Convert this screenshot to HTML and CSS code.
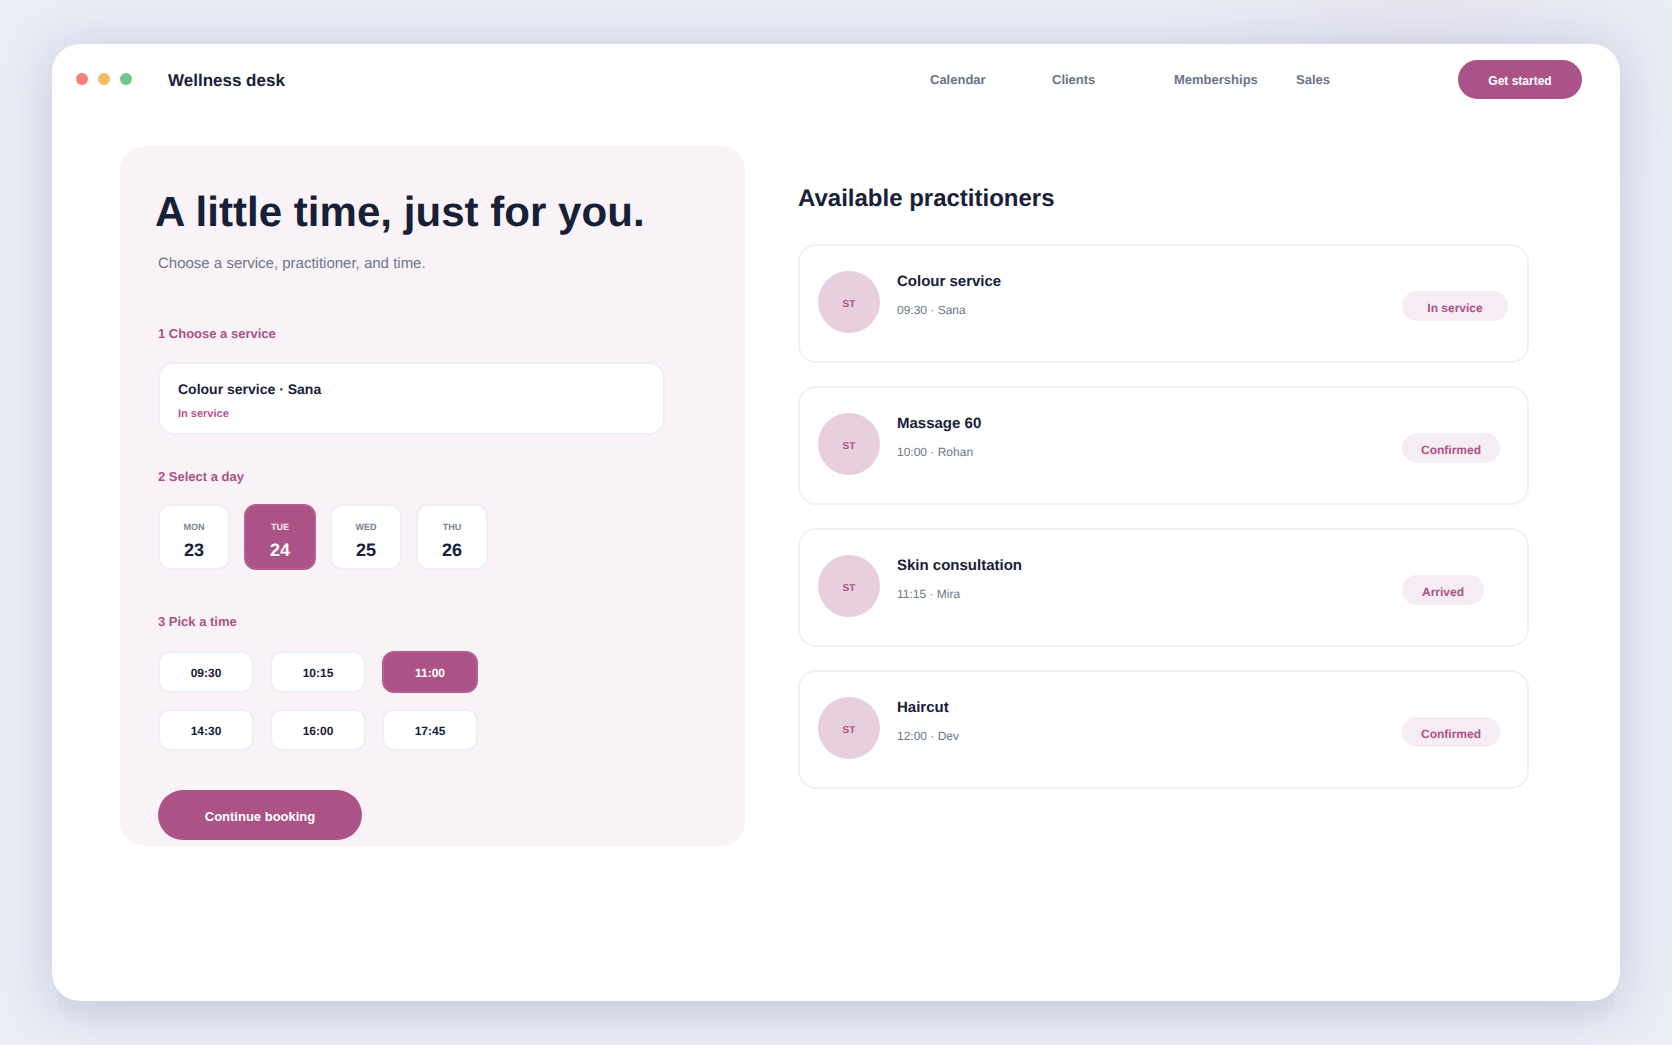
FILE: index.html
```html
<!DOCTYPE html>
<html lang="en">
<head>
    <meta charset="UTF-8">
    <meta name="viewport" content="width=device-width, initial-scale=1.0">
    <title>Wellness desk</title>
    <link rel="stylesheet" href="styles.css">
</head>
<body>
    <div class="window">
        <header class="topbar">
            <div class="dots">
                <span class="dot dot-red"></span>
                <span class="dot dot-yellow"></span>
                <span class="dot dot-green"></span>
            </div>
            <div class="brand">Wellness desk</div>
            <nav class="nav">
                <a>Calendar</a>
                <a>Clients</a>
                <a>Memberships</a>
                <a>Sales</a>
            </nav>
            <button class="btn btn-top">Get started</button>
        </header>

        <main class="main">
            <section class="panel">
                <h1>A little time, just for you.</h1>
                <p class="lead">Choose a service, practitioner, and time.</p>

                <h3 class="step step-first">1 Choose a service</h3>
                <div class="service">
                    <div class="service-title">Colour service · Sana</div>
                    <div class="service-status">In service</div>
                </div>

                <h3 class="step step-day">2 Select a day</h3>
                <div class="days">
                    <div class="day"><span class="day-name">MON</span><span class="day-num">23</span></div>
                    <div class="day active"><span class="day-name">TUE</span><span class="day-num">24</span></div>
                    <div class="day"><span class="day-name">WED</span><span class="day-num">25</span></div>
                    <div class="day"><span class="day-name">THU</span><span class="day-num">26</span></div>
                </div>

                <h3 class="step step-time">3 Pick a time</h3>
                <div class="times">
                    <div class="time">09:30</div>
                    <div class="time">10:15</div>
                    <div class="time active">11:00</div>
                    <div class="time">14:30</div>
                    <div class="time">16:00</div>
                    <div class="time">17:45</div>
                </div>

                <button class="btn btn-main">Continue booking</button>
            </section>

            <section class="list">
                <h2>Available practitioners</h2>

                <div class="card">
                    <div class="avatar">ST</div>
                    <div class="info">
                        <div class="name">Colour service</div>
                        <div class="meta">09:30 · Sana</div>
                    </div>
                    <div class="status"><span class="pill pill-wide">In service</span></div>
                </div>

                <div class="card">
                    <div class="avatar">ST</div>
                    <div class="info">
                        <div class="name">Massage 60</div>
                        <div class="meta">10:00 · Rohan</div>
                    </div>
                    <div class="status"><span class="pill">Confirmed</span></div>
                </div>

                <div class="card">
                    <div class="avatar">ST</div>
                    <div class="info">
                        <div class="name">Skin consultation</div>
                        <div class="meta">11:15 · Mira</div>
                    </div>
                    <div class="status"><span class="pill">Arrived</span></div>
                </div>

                <div class="card">
                    <div class="avatar">ST</div>
                    <div class="info">
                        <div class="name">Haircut</div>
                        <div class="meta">12:00 · Dev</div>
                    </div>
                    <div class="status"><span class="pill">Confirmed</span></div>
                </div>
            </section>
        </main>
    </div>
</body>
</html>
```

FILE: styles.css
```css
* {
    box-sizing: border-box;
}
html, body {
    height: 100%;
}
body {
    margin: 0;
    overflow: hidden;
    padding: 44px 52px 0;
    font-family: "Liberation Sans", Arial, sans-serif;
    text-rendering: geometricPrecision;
    color: #18213a;
    background-color: #e9edf6;
    background-image: radial-gradient(circle at 1420px 60px, rgba(171,82,134,0.06), rgba(171,82,134,0) 260px);
}
h1, h2, h3, p {
    margin: 0;
}
.window {
    width: 1568px;
    height: 957px;
    background: #fff;
    border-radius: 28px;
    box-shadow: 0 28px 0 -6px rgba(60,70,110,0.02), 0 6px 50px rgba(60,70,120,0.22);
}
.topbar {
    display: flex;
    align-items: center;
    height: 71px;
    padding: 0 38px 0 24px;
}
.dots {
    display: flex;
    gap: 10px;
    margin-top: -2px;
}
.dot {
    width: 12px;
    height: 12px;
    border-radius: 50%;
}
.dot-red { background: #f47f7f; }
.dot-yellow { background: #f2bd5f; }
.dot-green { background: #74c58c; }
.brand {
    margin-left: 36px;
    padding-top: 3px;
    font-size: 17px;
    font-weight: bold;
    width: 762px;
}
.nav {
    display: flex;
    gap: 38px;
    width: 528px;
    font-size: 13px;
    font-weight: bold;
    color: #6b7488;
}
.nav a {
    min-width: 84px;
}
.btn {
    display: block;
    border: none;
    border-radius: 999px;
    background: #ab5286;
    color: #fff;
    font-family: inherit;
    font-weight: bold;
}
.btn-top {
    width: 124px;
    height: 39px;
    padding-top: 4px;
    font-size: 12px;
}
.main {
    display: grid;
    grid-template-columns: 625px 731px;
    gap: 53px;
    padding: 31px 0 0 68px;
}
.panel {
    height: 700px;
    padding: 38px 38px 0;
    background: #f9f3f8;
    border-radius: 24px;
}
h1 {
    margin-top: 2px;
    margin-left: -3px;
    font-size: 42px;
    line-height: 52px;
    font-weight: bold;
    letter-spacing: 0.04px;
    color: #162036;
}
.lead {
    margin-top: 16px;
    font-size: 15px;
    line-height: 20px;
    color: #6d768c;
}
.step {
    font-size: 13px;
    line-height: 16px;
    font-weight: bold;
    color: #ab5286;
}
.step-first { margin-top: 52px; }
.step-day { margin-top: 34px; }
.step-time { margin-top: 44px; }
.service {
    width: 507px;
    height: 73px;
    margin-top: 20px;
    padding: 15px 18px;
    background: #fff;
    border: 2px solid #edeef6;
    border-radius: 16px;
}
.service-title {
    font-size: 14px;
    line-height: 20px;
    font-weight: bold;
}
.service-status {
    margin-top: 8px;
    font-size: 11px;
    line-height: 14px;
    font-weight: bold;
    color: #bb5290;
}
.days {
    display: flex;
    gap: 14px;
    margin-top: 19px;
}
.day {
    display: flex;
    flex-direction: column;
    align-items: center;
    width: 72px;
    height: 66px;
    padding-top: 15px;
    background: #fff;
    border: 2px solid #edeef6;
    border-radius: 12px;
}
.day-name {
    font-size: 9px;
    line-height: 12px;
    font-weight: bold;
    color: #7a8299;
}
.day-num {
    margin-top: 6px;
    font-size: 18px;
    line-height: 22px;
    font-weight: bold;
}
.day.active {
    background: #ab5286;
    border-color: #b2608f;
    color: #fff;
}
.day.active .day-name {
    color: #f7e9f1;
}
.times {
    display: grid;
    grid-template-columns: repeat(3, 96px);
    gap: 16px;
    margin-top: 21px;
}
.time {
    display: flex;
    align-items: center;
    justify-content: center;
    height: 42px;
    padding-top: 2px;
    background: #fff;
    border: 2px solid #edeef6;
    border-radius: 12px;
    font-size: 12px;
    font-weight: bold;
}
.time.active {
    background: #ab5286;
    border-color: #b2608f;
    color: #fff;
}
.btn-main {
    width: 204px;
    height: 50px;
    margin-top: 39px;
    padding-top: 3px;
    font-size: 13px;
}
.list h2 {
    margin-top: 38px;
    font-size: 24px;
    line-height: 30px;
    font-weight: bold;
}
.card {
    display: flex;
    align-items: flex-start;
    height: 119px;
    margin-top: 23px;
    padding: 25px 18px 0;
    background: #fff;
    border: 2px solid #f0f1f7;
    border-radius: 18px;
}
.list h2 + .card {
    margin-top: 30px;
}
.avatar {
    flex: none;
    display: flex;
    align-items: center;
    justify-content: center;
    width: 62px;
    height: 62px;
    padding-top: 4px;
    border-radius: 50%;
    background: #e8cfde;
    color: #ab5286;
    font-size: 10px;
    font-weight: bold;
}
.info {
    flex: 1;
    margin-left: 17px;
    padding-top: 1px;
}
.name {
    font-size: 15px;
    line-height: 20px;
    font-weight: bold;
}
.meta {
    margin-top: 9px;
    font-size: 12px;
    line-height: 18px;
    color: #6d768c;
}
.status {
    width: 107px;
    margin-top: 20px;
}
.pill {
    display: inline-block;
    min-width: 82px;
    height: 30px;
    padding: 0 19px;
    line-height: 34px;
    text-align: center;
    background: #f6ecf3;
    border-radius: 999px;
    color: #ab5286;
    font-size: 12px;
    font-weight: bold;
}
.pill-wide {
    min-width: 106px;
}
```
